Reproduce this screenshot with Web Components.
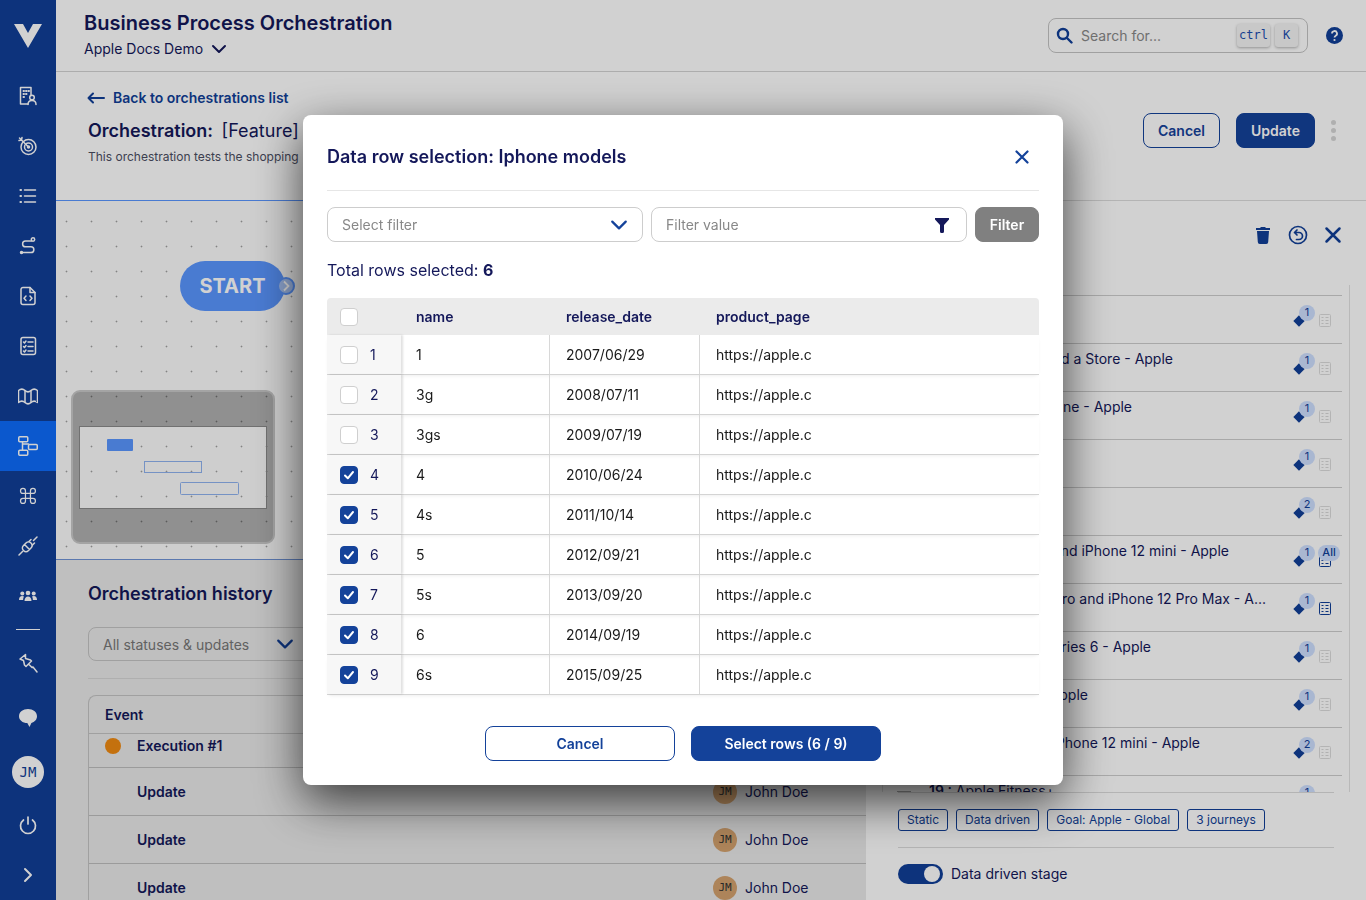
<!DOCTYPE html>
<html lang="en">
<head>
<meta charset="utf-8">
<title>Business Process Orchestration</title>
<style>
  html, body { margin: 0; height: 100%; overflow: hidden; background: #fff; }
  body { font-family: Inter, "Noto Sans", sans-serif; font-size: 14px; color: #14185a; }
</style>
</head>
<body>
<app-shell>
  <side-nav slot="nav"></side-nav>
  <top-bar slot="top"></top-bar>
  <orch-head slot="head"></orch-head>
  <flow-canvas slot="canvas"></flow-canvas>
  <orch-history slot="history"></orch-history>
  <stage-panel slot="panel">
    <stage-row end="1040" flag="1" title="10 : Apple"></stage-row>
    <stage-row end="1173" flag="1" title="11 : Find a Store - Apple"></stage-row>
    <stage-row end="1132" flag="1" title="12 : iPhone - Apple"></stage-row>
    <stage-row end="1040" flag="1" title="13 : iPad"></stage-row>
    <stage-row end="1040" flag="2" title="14 : Mac"></stage-row>
    <stage-row end="1229" flag="1" all title="15 : iPhone 12 and iPhone 12 mini - Apple"></stage-row>
    <stage-row end="1266" flag="1" active title="16 : iPhone 12 Pro and iPhone 12 Pro Max - A..."></stage-row>
    <stage-row end="1151" flag="1" title="17 : Watch Series 6 - Apple"></stage-row>
    <stage-row end="1088" flag="1" title="18 : AirPods - Apple"></stage-row>
    <stage-row end="1200" flag="2" title="18 : iPhone 12 mini - Apple"></stage-row>
    <stage-row end="1054" flag="1" title="19 : Apple Fitness+"></stage-row>
  </stage-panel>
</app-shell>
<row-modal></row-modal>

<script>
const chevron = (color, w = 16) => `<svg width="${w}" height="${w}" viewBox="0 0 16 16" fill="none" stroke="${color}" stroke-width="2" stroke-linecap="round" stroke-linejoin="round"><path d="M2 5l6 6 6-6"/></svg>`;

// every nav icon is drawn on a 20x20 box
const NAV_ICONS = [
  `<path d="M10 18H2.500V1.500h10.500v8"/><path d="M5.500 5h.5M8 5h.5M10.500 5h.5M5.500 8h.5M8 8h.5M5.500 11h.5" stroke-width="2"/><circle cx="14" cy="11.500" r="2.300"/><path d="M10 18.500c0-2.600 1.700-4 4-4s4 1.400 4 4"/>`,
  `<circle cx="10.500" cy="11" r="7.500"/><circle cx="10.500" cy="11" r="4"/><circle cx="10.500" cy="11" r="1" fill="currentColor"/><path d="M1.500 2l9 9M1 4.500l2.500-.5.500-2.500"/>`,
  `<path d="M6.500 4h11M6.500 10h11M6.500 16h11"/><path d="M2.500 4h.5M2.500 10h.5M2.500 16h.5" stroke-width="2.200"/>`,
  `<circle cx="15" cy="3.500" r="1.700"/><path d="M13.500 5H7.500a2.800 2.800 0 0 0 0 5.800h5.500a2.700 2.700 0 0 1 0 5.700H4.500"/><circle cx="3.500" cy="16.500" r="1" fill="currentColor"/>`,
  `<path d="M12 1.500H5a2 2 0 0 0-2 2v13a2 2 0 0 0 2 2h10a2 2 0 0 0 2-2V6.500z"/><path d="M12 1.500v5h5"/><path d="M8 10l-2 2.200L8 14.500M12 10l2 2.200-2 2.300"/>`,
  `<rect x="3" y="1.500" width="14.500" height="17" rx="2"/><path d="M5.500 6l1 1 1.500-2M5.500 10.500l1 1 1.500-2M5.500 15l1 1 1.500-2M10 6h5M10 10.500h5M10 15h5"/>`,
  `<path d="M.5 4.500c2.200-1.800 4.500-1.800 6.500 0s4 1.800 6 0 4.300-1.800 6.500 0V16.500c-2.200-1.800-4.500-1.800-6.500 0s-4 1.800-6 0-4.300-1.800-6.500 0z"/><path d="M7 4.500V16.500M13 4.500V16.500"/>`,
  `<rect x=".75" y=".75" width="9" height="5" rx="1"/><rect x="10.500" y="8.500" width="8.750" height="5" rx="1"/><rect x=".75" y="14.250" width="9" height="5" rx="1"/><path d="M4.500 5.750v8.500M4.500 8h6"/>`,
  `<g transform="scale(.83)"><path d="M15 6v12a3 3 0 1 0 3-3H6a3 3 0 1 0 3 3V6a3 3 0 1 0-3 3h12a3 3 0 1 0-3-3"/></g>`,
  `<path d="M1 19l3.500-3.500M15.500 4.500L19 1M6.500 8.500l5 5 1.500-1.500c1.500-1.500 1.500-3.500 0-5s-3.500-1.500-5 0zM8 7L5.500 9.500c-1.500 1.500-1.500 3.500 0 5s3.500 1.500 5 0L13 12"/><path d="M11 5.500l2-2M14.500 9l2-2"/>`,
  `<g fill="currentColor" stroke="none"><circle cx="10" cy="7" r="2.300"/><circle cx="4.300" cy="7.500" r="2"/><circle cx="15.700" cy="7.500" r="2"/><path d="M6.500 15c0-3 1.500-4.500 3.500-4.500s3.500 1.500 3.500 4.500zM1 14c0-2.800 1.200-4 3.200-4 .8 0 1.300.2 1.800.5-.6 1-.9 2.100-.9 3.500zM19 14c0-2.800-1.200-4-3.200-4-.8 0-1.300.2-1.800.5.600 1 .9 2.100.9 3.500z"/></g>`
];

class AppShell extends HTMLElement {
  constructor() {
    super();
    this.attachShadow({ mode: "open" }).innerHTML = `
      <style>
        :host { display: grid; grid-template-columns: 56px 810px 500px; grid-template-rows: 72px 128px 360px 340px; width: 1366px; height: 900px; overflow: hidden; }
        ::slotted([slot=nav]) { grid-row: 1 / 5; }
        ::slotted([slot=top]), ::slotted([slot=head]) { grid-column: 2 / 4; }
        ::slotted([slot=panel]) { grid-column: 3; grid-row: 3 / 5; }
      </style>
      <slot name="nav"></slot><slot name="top"></slot><slot name="head"></slot>
      <slot name="canvas"></slot><slot name="panel"></slot><slot name="history"></slot>`;
  }
}

class SideNav extends HTMLElement {
  constructor() {
    super();
    const items = NAV_ICONS.map((icon, i) => `<div class="item ${i === 7 ? "on" : ""}"><svg width="20" height="20" viewBox="0 0 20 20" fill="none" stroke="currentColor" stroke-width="1.500" stroke-linecap="round" stroke-linejoin="round">${icon}</svg></div>`).join("");
    this.attachShadow({ mode: "open" }).innerHTML = `
      <style>
        :host { display: flex; flex-direction: column; align-items: stretch; background: #113f98; color: #fff; height: 900px; }
        .logo { height: 71px; display: flex; align-items: center; justify-content: center; }
        .item { height: 50px; display: flex; align-items: center; justify-content: center; }
        .on { background: #0e6cfc; }
        hr { border: 0; height: 1px; background: #fff; margin: 8px 16px 0; }
        .pin { margin-top: 23px; height: 20px; display: flex; justify-content: center; }
        .chat { margin-top: 35px; height: 20px; display: flex; justify-content: center; }
        .me { margin: 28px auto 0; width: 32px; height: 32px; border-radius: 50%; background: #fff; color: #113f98; font: 14px/32px "DejaVu Sans Mono", "Liberation Mono", monospace; text-align: center; }
        .power { margin-top: 27px; height: 20px; display: flex; justify-content: center; }
        .next { margin-top: 30px; height: 20px; display: flex; justify-content: center; }
      </style>
      <div class="logo"><svg width="28" height="24" viewBox="0 0 28 24" fill="#fff"><path d="M0 0h9l5 9 5-9h9L14 24z"/></svg></div>
      ${items}
      <hr>
      <div class="pin"><svg width="20" height="20" viewBox="0 0 20 20" fill="none" stroke="currentColor" stroke-width="1.500" stroke-linejoin="round" stroke-linecap="round"><path d="M7.500 1.500L2 6l3.500 1.500 1 4.500 1.500 1.500 5.500-5.500L12.500 7 7.500 5.500zM10.500 11l3.500 3.500 1-.5 4 5"/></svg></div>
      <div class="chat"><svg width="20" height="20" viewBox="0 0 20 20" fill="#fff"><path d="M10 1c5 0 9 2.900 9 7.200 0 3.400-2.500 5.800-5.600 6.700L11.500 19l-2.200-3.900C4.600 14.800 1 12.200 1 8.200 1 3.900 5 1 10 1z"/></svg></div>
      <div class="me">JM</div>
      <div class="power"><svg width="20" height="20" viewBox="0 0 20 20" fill="none" stroke="currentColor" stroke-width="1.700" stroke-linecap="round"><path d="M10 2v7M5.500 5a7.500 7.500 0 1 0 9 0"/></svg></div>
      <div class="next"><svg width="20" height="20" viewBox="0 0 20 20" fill="none" stroke="currentColor" stroke-width="2" stroke-linecap="round" stroke-linejoin="round"><path d="M7 4l6 6-6 6"/></svg></div>`;
  }
}

class TopBar extends HTMLElement {
  constructor() {
    super();
    this.attachShadow({ mode: "open" }).innerHTML = `
      <style>
        :host { display: flex; align-items: flex-start; justify-content: space-between; height: 72px; box-sizing: border-box; padding: 11px 23px 0 28px; background: #fff; border-bottom: 1px solid #d4d4d4; }
        h1 { margin: 0; font-size: 20px; line-height: 24px; font-weight: 600; }
        .org { margin-top: 4px; display: flex; align-items: center; gap: 8px; line-height: 20px; }
        .right { display: flex; align-items: center; gap: 18px; margin-top: 7px; }
        .search { width: 260px; height: 35px; box-sizing: border-box; border: 1px solid #c4c4c4; border-radius: 8px; display: flex; align-items: center; padding: 0 9px 0 7px; color: #888; }
        .search span.ph { margin-left: 8px; flex: 1; }
        kbd { font: 12px/23px "DejaVu Sans Mono", "Liberation Mono", monospace; color: #1c4fb0; background: #f4f4f4; border-radius: 3px; box-shadow: 0 1px 3px rgba(0,0,0,.3); height: 23px; text-align: center; }
        .ctrl { width: 33px; margin-right: 5px; }
        .k { width: 23px; }
      </style>
      <div>
        <h1>Business Process Orchestration</h1>
        <div class="org">Apple Docs Demo ${chevron("#14185a")}</div>
      </div>
      <div class="right">
        <div class="search">
          <svg width="17" height="17" viewBox="0 0 17 17" fill="none" stroke="#113f98" stroke-width="2.400" stroke-linecap="round"><circle cx="7" cy="7" r="5"/><path d="M11 11l4.500 4.500"/></svg>
          <span class="ph">Search for...</span>
          <kbd class="ctrl">ctrl</kbd><kbd class="k">K</kbd>
        </div>
        <svg width="17" height="17" viewBox="0 0 17 17"><circle cx="8.500" cy="8.500" r="8.500" fill="#113f98"/><path d="M6 6.500a2.500 2.500 0 1 1 3.700 2.200c-.8.500-1.200.9-1.200 1.800" fill="none" stroke="#fff" stroke-width="1.800"/><circle cx="8.500" cy="13" r="1.100" fill="#fff"/></svg>
      </div>`;
  }
}

class UiButton extends HTMLElement {
  constructor() {
    super();
    this.attachShadow({ mode: "open" }).innerHTML = `
      <style>
        :host { display: flex; align-items: center; justify-content: center; height: 35px; box-sizing: border-box; border-radius: 8px; font-size: 14px; font-weight: 600; background: #14429a; color: #fff; border: 1px solid #14429a; }
        :host([outline]) { background: transparent; color: #14429a; }
        :host([muted]) { background: #808080; border-color: #808080; }
      </style><slot></slot>`;
  }
}

class OrchHead extends HTMLElement {
  constructor() {
    super();
    this.attachShadow({ mode: "open" }).innerHTML = `
      <style>
        :host { display: flex; justify-content: space-between; height: 128px; box-sizing: border-box; padding: 16px 30px 0 32px; background: #fff; }
        .back { display: flex; align-items: center; gap: 8px; margin-left: -1px; color: #113f98; font-weight: 600; line-height: 20px; }
        h2 { margin: 11px 0 0; font-size: 18px; line-height: 24px; font-weight: 600; white-space: nowrap; }
        h2 span { font-weight: 400; margin-left: 4px; }
        p { margin: 6px 0 0; font-size: 12px; line-height: 16px; color: #4b4e62; white-space: pre; }
        .actions { display: flex; align-items: center; height: 35px; margin-top: 25px; }
        .cancel { width: 77px; margin-right: 16px; }
        .update { width: 79px; margin-right: 16px; }
        .dots { display: flex; flex-direction: column; gap: 3px; }
        .dots i { width: 5px; height: 5px; border-radius: 50%; background: #d6d6d6; }
      </style>
      <div>
        <div class="back"><svg width="18" height="12" viewBox="0 0 18 12" fill="none" stroke="#113f98" stroke-width="2" stroke-linecap="round" stroke-linejoin="round"><path d="M17 6H1.500M6 1.500L1.500 6 6 10.500"/></svg>Back to orchestrations list</div>
        <h2>Orchestration: <span>[Feature] Shopping</span></h2>
        <p>This orchestration tests the shopping   journey</p>
      </div>
      <div class="actions">
        <ui-button outline class="cancel">Cancel</ui-button>
        <ui-button class="update">Update</ui-button>
        <div class="dots"><i></i><i></i><i></i></div>
      </div>`;
  }
}

class FlowCanvas extends HTMLElement {
  constructor() {
    super();
    this.attachShadow({ mode: "open" }).innerHTML = `
      <style>
        :host { display: block; position: relative; height: 360px; box-sizing: border-box; border-top: 1px solid #5a96ff; border-bottom: 1px solid #6f93d6; overflow: hidden;
          background: #fcfcfc radial-gradient(circle, #a0a0a0 .8px, transparent 1.100px) -2px 8px / 25px 25px; }
        .start { position: absolute; left: 124px; top: 60px; width: 105px; height: 50px; border-radius: 25px; background: #5a96ff; color: #fff; font-size: 20px; font-weight: 700; line-height: 50px; text-align: center; box-sizing: border-box; }
        .port { position: absolute; left: 221px; top: 76px; width: 18px; height: 18px; box-sizing: border-box; border-radius: 50%; background: #a9c4f5; border: 2px solid #5a96ff; display: flex; align-items: center; justify-content: center; }
        .mini { position: absolute; left: 15px; top: 189px; }
      </style>
      <div class="start">START</div>
      <div class="port"><svg width="12" height="12" viewBox="0 0 12 12" fill="none" stroke="#fff" stroke-width="1.800"><path d="M4 1.500L8.500 6 4 10.500"/></svg></div>
      <svg class="mini" width="204" height="154" viewBox="0 0 204 154">
        <path fill-rule="evenodd" fill="rgba(0,0,0,.3)" d="M9 1h186a8 8 0 0 1 8 8v136a8 8 0 0 1-8 8H9a8 8 0 0 1-8-8V9a8 8 0 0 1 8-8zM8 36v83h188V36z"/>
        <rect x="1" y="1" width="202" height="152" rx="8" fill="none" stroke="#c8c8c8" stroke-width="2"/>
        <rect x="8.500" y="36.500" width="187" height="82" fill="none" stroke="#8a8a8a"/>
        <rect x="36" y="49" width="26" height="12" rx="1" fill="#5a96ff"/>
        <rect x="73.500" y="71.500" width="57" height="11" fill="none" stroke="#8fb3f0"/>
        <rect x="109.500" y="92.500" width="58" height="12" rx="1" fill="none" stroke="#8fb3f0"/>
      </svg>`;
  }
}

class OrchHistory extends HTMLElement {
  constructor() {
    super();
    const rows = ["Update", "Update", "Update"].map(n => `
      <div class="row"><span class="ev">${n}</span><span class="who"><i>JM</i>John Doe</span></div>`).join("");
    this.attachShadow({ mode: "open" }).innerHTML = `
      <style>
        :host { display: block; height: 340px; overflow: hidden; box-sizing: border-box; padding: 22px 0 0 32px; background: #e9e9e9; }
        h3 { margin: 0; font-size: 18px; line-height: 24px; font-weight: 600; }
        .select { margin-top: 21px; width: 222px; height: 34px; box-sizing: border-box; border: 1px solid #c4c4c4; border-radius: 8px; display: flex; align-items: center; justify-content: space-between; padding: 0 15px 0 14px; color: #777; }
        hr { border: 0; height: 1px; background: #d6d6d6; margin: 17px 0 16px; }
        .table { border: 1px solid #c4c4c4; border-right: 0; border-bottom: 0; border-radius: 8px 0 0 0; }
        .head { height: 37px; line-height: 37px; padding-left: 16px; font-weight: 600; border-bottom: 1px solid #c4c4c4; }
        .row { position: relative; height: 48px; box-sizing: border-box; border-bottom: 1px solid #bdbdbd; display: flex; font-weight: 600; padding-left: 48px; line-height: 47px; }
        .first { height: 34px; line-height: 24px; padding-top: 0; }
        .dot { position: absolute; left: 16px; top: 4px; width: 16px; height: 16px; border-radius: 50%; background: #f08a12; }
        .who { position: absolute; left: 624px; top: 0; display: flex; align-items: center; gap: 8px; height: 47px; font-weight: 400; }
        .who i { width: 24px; height: 24px; border-radius: 50%; background: #d4a26e; font: 11px/24px "DejaVu Sans Mono", monospace; text-align: center; color: #333; }
      </style>
      <h3>Orchestration history</h3>
      <div class="select">All statuses &amp; updates ${chevron("#113f98", 18)}</div>
      <hr>
      <div class="table">
        <div class="head">Event</div>
        <div class="row first"><span class="dot"></span><span>Execution #1</span></div>
        ${rows}
      </div>`;
  }
}

class StagePanel extends HTMLElement {
  constructor() {
    super();
    this.attachShadow({ mode: "open" }).innerHTML = `
      <style>
        :host { display: flex; flex-direction: column; height: 700px; background: #fff; border-top: 1px solid #dcdcdc; box-sizing: border-box; }
        .tools { height: 84px; flex: none; box-sizing: border-box; padding: 22px 21px 0 0; display: flex; justify-content: flex-end; gap: 11px; }
        .list { height: 507px; flex: none; box-sizing: border-box; margin: 0 16px; padding: 10px 7px 0 0; border: solid #e2e2e2; border-width: 0 1px; overflow: hidden; }
        .foot { margin: 0 32px; border-top: 1px solid #dcdcdc; }
        .tags { display: flex; gap: 8px; padding: 16px 0; border-bottom: 1px solid #dcdcdc; }
        .tags span { height: 22px; box-sizing: border-box; border: 1px solid #113f98; border-radius: 3px; padding: 0 8px; font-size: 12px; line-height: 20px; color: #113f98; }
        .drive { display: flex; align-items: center; gap: 8px; padding-top: 16px; line-height: 18px; }
        .toggle { width: 45px; height: 20px; border-radius: 10px; background: #113f98; position: relative; }
        .toggle i { position: absolute; right: 3px; top: 2px; width: 16px; height: 16px; border-radius: 50%; background: #fff; }
      </style>
      <div class="tools">
        <svg width="24" height="24" viewBox="0 0 24 24" fill="#113f98"><path d="M5 5h14v2H5zM9.500 4h5v1.500h-5zM6 8h12l-.8 11a2 2 0 0 1-2 2H8.800a2 2 0 0 1-2-2z"/></svg>
        <svg width="24" height="24" viewBox="0 0 24 24" fill="none" stroke="#113f98" stroke-width="1.700" stroke-linecap="round" stroke-linejoin="round"><circle cx="12" cy="12" r="8.500"/><path d="M11 7l-2.500 2.500L11 12M8.500 9.500H13a3 3 0 0 1 0 7h-2.500"/></svg>
        <svg width="24" height="24" viewBox="0 0 24 24" fill="none" stroke="#113f98" stroke-width="2.500" stroke-linecap="round"><path d="M5.500 5.500l13 13M18.500 5.500l-13 13"/></svg>
      </div>
      <div class="list"><slot></slot></div>
      <div class="foot">
        <div class="tags"><span>Static</span><span>Data driven</span><span>Goal: Apple - Global</span><span>3 journeys</span></div>
        <div class="drive"><div class="toggle"><i></i></div>Data driven stage</div>
      </div>`;
  }
}

class StageRow extends HTMLElement {
  constructor() {
    super();
    this.attachShadow({ mode: "open" });
  }
  connectedCallback() {
    const end = +this.getAttribute("end");
    const lit = this.hasAttribute("active") || this.hasAttribute("all");
    const [no, name] = this.getAttribute("title").split(" : ");
    this.shadowRoot.innerHTML = `
      <style>
        :host { display: flex; height: 48px; box-sizing: border-box; border-top: 1px solid #cecece; }
        .grip { flex: none; width: 14px; height: 14px; margin: 15px 18px 0 14px; border-top: 1px solid #a8a8a8; box-sizing: border-box; }
        .name { flex: none; padding-top: 5px; line-height: 20px; white-space: nowrap; text-align: right; overflow: hidden; box-sizing: border-box; width: ${end - 929}px; }
        .name b { font-weight: 600; }
        .flags { position: relative; flex: none; width: 48px; margin-left: auto; }
        .dia { position: absolute; left: 1px; top: 21px; width: 8px; height: 8px; background: #113f98; transform: rotate(45deg); }
        .num, .all { position: absolute; top: 9px; height: 16px; border-radius: 8px; background: #cfe0ff; color: #113f98; font-size: 11px; line-height: 15px; text-align: center; }
        .num { left: 5px; width: 16px; }
        .all { left: 24px; width: 22px; font-weight: 500; }
        .doc { position: absolute; left: 25px; top: 18px; }
      </style>
      <div class="grip"></div>
      <div class="name"><b>${no} :</b> ${name}</div>
      <div class="flags">
        <i class="dia"></i><span class="num">${this.getAttribute("flag")}</span>
        <svg class="doc" width="12" height="13" viewBox="0 0 12 13" fill="none" stroke="${lit ? "#113f98" : "#dcdcdc"}"><rect x=".5" y=".5" width="11" height="12" rx="1"/><path d="M2.500 3.500h2M6.500 3.500h3M2.500 6.500h2M6.500 6.500h3M2.500 9.500h2M6.500 9.500h3" stroke="${lit ? "#113f98" : "#d8d8d8"}"/></svg>
        ${this.hasAttribute("all") ? `<span class="all">All</span>` : ""}
      </div>`;
    this.removeAttribute("title");
  }
}

class CheckBox extends HTMLElement {
  constructor() {
    super();
    this.attachShadow({ mode: "open" });
  }
  connectedCallback() {
    this.shadowRoot.innerHTML = `
      <style>
        :host { display: flex; align-items: center; justify-content: center; width: 18px; height: 18px; box-sizing: border-box; border-radius: 4px; border: 1px solid #cfcfcf; background: #fff; flex: none; }
        :host([checked]) { background: #14429a; border-color: #14429a; }
      </style>
      ${this.hasAttribute("checked") ? `<svg width="12" height="12" viewBox="0 0 12 12" fill="none" stroke="#fff" stroke-width="2" stroke-linecap="round" stroke-linejoin="round"><path d="M2 6.500l2.800 2.800L10 3"/></svg>` : ""}`;
  }
}

class DataRow extends HTMLElement {
  constructor() {
    super();
    this.attachShadow({ mode: "open" });
  }
  connectedCallback() {
    const [no, name, date] = this.getAttribute("cells").split("|");
    this.shadowRoot.innerHTML = `
      <style>
        :host { display: grid; grid-template-columns: 74px 149px 150px 1fr; height: 40px; box-sizing: border-box; border-bottom: 1px solid #d4d4d4; color: #1a1a1a; line-height: 39px; box-shadow: 0 2px 4px -2px rgba(0,0,0,.1); }
        .lead { display: flex; align-items: center; gap: 12px; padding-left: 13px; background: #f7f7f7; color: #14185a; box-shadow: 2px 0 2px rgba(0,0,0,.12); position: relative; }
        .cell { padding-left: 15px; border-right: 1px solid #d8d8d8; }
        .cell + .cell { padding-left: 16px; }
        .url { padding-left: 16px; }
      </style>
      <div class="lead"><check-box ${this.hasAttribute("checked") ? "checked" : ""}></check-box>${no}</div>
      <div class="cell">${name}</div>
      <div class="cell">${date}</div>
      <div class="url">https://apple.c</div>`;
  }
}

class RowModal extends HTMLElement {
  constructor() {
    super();
    const data = ["1|1|2007/06/29", "2|3g|2008/07/11", "3|3gs|2009/07/19", "4|4|2010/06/24", "5|4s|2011/10/14", "6|5|2012/09/21", "7|5s|2013/09/20", "8|6|2014/09/19", "9|6s|2015/09/25"];
    const rows = data.map((d, i) => `<data-row cells="${d}" ${i > 2 ? "checked" : ""}></data-row>`).join("");
    this.attachShadow({ mode: "open" }).innerHTML = `
      <style>
        :host { position: fixed; inset: 0; display: flex; align-items: center; justify-content: center; background: rgba(0,0,0,.18); }
        .box { width: 760px; height: 670px; box-sizing: border-box; padding: 0 24px; background: #fff; border-radius: 8px; box-shadow: 0 16px 48px rgba(0,0,0,.7); color: #14185a; }
        .title { display: flex; align-items: center; justify-content: space-between; height: 76px; box-sizing: border-box; padding: 9px 9px 0 0; border-bottom: 1px solid #e6e6e6; }
        h2 { margin: 0; font-size: 18px; font-weight: 600; line-height: 24px; }
        .filters { display: flex; gap: 8px; margin-top: 16px; }
        .field { width: 316px; height: 35px; box-sizing: border-box; border: 1px solid #cdcdcd; border-radius: 8px; display: flex; align-items: center; justify-content: space-between; padding: 0 14px; color: #888; }
        .funnel { margin-right: 3px; }
        .filter { width: 64px; }
        .total { margin-top: 16px; font-size: 16px; line-height: 24px; }
        .total b { font-weight: 700; }
        .table { margin-top: 16px; }
        .thead { display: grid; grid-template-columns: 74px 149px 150px 1fr; height: 37px; line-height: 37px; background: #ebebeb; border-radius: 4px 4px 0 0; font-weight: 600; }
        .thead div { padding-left: 15px; }
        .thead div + div + div { padding-left: 16px; }
        .thead .lead { padding-left: 13px; display: flex; align-items: center; }
        .actions { display: flex; justify-content: center; gap: 16px; margin-top: 31px; }
        .actions ui-button { width: 190px; }
      </style>
      <div class="box">
        <div class="title"><h2>Data row selection: Iphone models</h2>
          <svg width="16" height="16" viewBox="0 0 16 16" fill="none" stroke="#14429a" stroke-width="2.200" stroke-linecap="round"><path d="M2.500 2.500l11 11M13.500 2.500l-11 11"/></svg></div>
        <div class="filters">
          <div class="field">Select filter ${chevron("#14429a", 18)}</div>
          <div class="field">Filter value <svg class="funnel" width="14" height="16" viewBox="0 0 14 16" fill="#14185a"><path d="M0 1h14v1.500L9 8v6.500a1.500 1.500 0 0 1-1.500 1.500h-1A1.500 1.500 0 0 1 5 14.500V8L0 2.500z"/></svg></div>
          <ui-button muted class="filter">Filter</ui-button>
        </div>
        <div class="total">Total rows selected: <b>6</b></div>
        <div class="table">
          <div class="thead"><div class="lead"><check-box></check-box></div><div>name</div><div>release_date</div><div>product_page</div></div>
          ${rows}
        </div>
        <div class="actions"><ui-button outline>Cancel</ui-button><ui-button>Select rows (6 / 9)</ui-button></div>
      </div>`;
  }
}

customElements.define("ui-button", UiButton);
customElements.define("check-box", CheckBox);
customElements.define("data-row", DataRow);
customElements.define("stage-row", StageRow);
customElements.define("side-nav", SideNav);
customElements.define("top-bar", TopBar);
customElements.define("orch-head", OrchHead);
customElements.define("flow-canvas", FlowCanvas);
customElements.define("orch-history", OrchHistory);
customElements.define("stage-panel", StagePanel);
customElements.define("row-modal", RowModal);
customElements.define("app-shell", AppShell);
</script>
</body>
</html>
